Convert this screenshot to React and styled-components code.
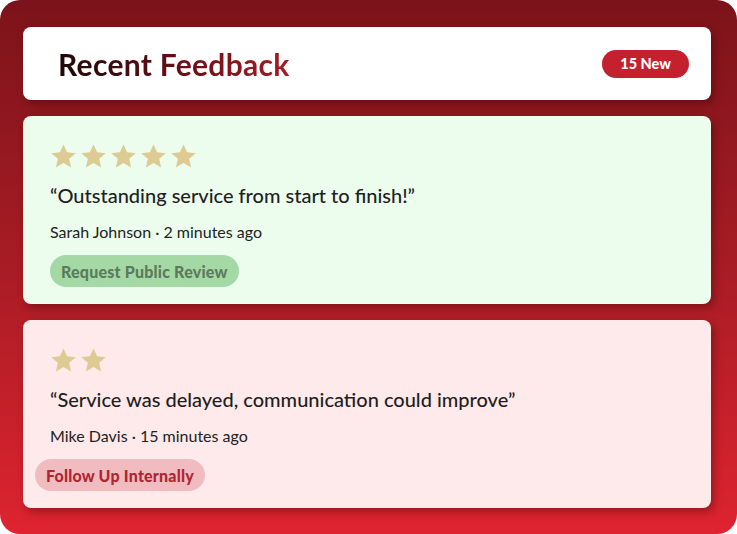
import React from "react";
import styled, { createGlobalStyle } from "styled-components";

const Global = createGlobalStyle`
  html, body { margin: 0; padding: 0; background: #ffffff; }
  * { box-sizing: border-box; }
`;

const Frame = styled.div`
  width: 737px;
  height: 534px;
  border-radius: 20px;
  background: linear-gradient(180deg, #7c131a 0%, #a81c24 50%, #de2430 100%);
  padding: 27px 26px 26px 23px;
  display: flex;
  flex-direction: column;
  gap: 16px;
  font-family: "Lato", "Liberation Sans", sans-serif;
`;

const Header = styled.div`
  height: 73px;
  flex-shrink: 0;
  background: #ffffff;
  border-radius: 8px;
  box-shadow: 3px 4px 8px rgba(40, 0, 0, 0.35);
  display: flex;
  align-items: center;
  justify-content: space-between;
  padding: 0 22px 0 35px;
`;

const Title = styled.h1`
  margin: 0;
  font-size: 30px;
  font-weight: 700;
  letter-spacing: 0.3px;
  background: linear-gradient(90deg, #1e0708 0%, #6a1016 55%, #a51d26 100%);
  -webkit-background-clip: text;
  background-clip: text;
  color: transparent;
`;

const Badge = styled.span`
  height: 28px;
  padding: 0 18px;
  border-radius: 14px;
  background: #c4202e;
  color: #ffffff;
  font-size: 14.5px;
  font-weight: 900;
  display: flex;
  align-items: center;
`;

const Card = styled.div`
  height: 188px;
  flex-shrink: 0;
  background: ${(p) => (p.$tone === "good" ? "#ecfdee" : "#feeaea")};
  border-radius: 8px;
  box-shadow: 3px 4px 8px rgba(40, 0, 0, 0.35);
  padding: 26px 27px 17px 27px;
  display: flex;
  flex-direction: column;
  align-items: flex-start;
`;

const Stars = styled.div`
  display: flex;
  gap: 3px;
  height: 28px;
  align-items: center;
`;

const Star = styled.svg`
  width: 27px;
  height: 27px;
  display: block;
`;

const Quote = styled.p`
  margin: 12px 0 0;
  font-size: 20px;
  font-weight: 500;
  color: #1f1f1f;
  line-height: 26px;
`;

const Meta = styled.p`
  margin: 14px 0 0;
  font-size: 16px;
  color: #222222;
  line-height: 20px;
`;

const Action = styled.button`
  margin-top: 13px;
  margin-left: ${(p) => (p.$shift ? "-15px" : "0")};
  height: 32px;
  padding: 0 11px;
  border: none;
  border-radius: 16px;
  background: ${(p) => (p.$tone === "good" ? "#a4d9a5" : "#f1bcc0")};
  color: ${(p) => (p.$tone === "good" ? "#5b7b5c" : "#ae2632")};
  font-family: "Lato", "Liberation Sans", sans-serif;
  font-size: 16px;
  font-weight: 900;
  letter-spacing: 0.2px;
  cursor: pointer;
`;

const StarIcon = () => (
  <Star viewBox="0 0 24 24">
    <path
      d="M12 1.3l3.2 7 7.7.7-5.9 5.1 1.8 7.6L12 17.8l-6.8 3.9 1.8-7.6-5.9-5.1 7.7-.7z"
      fill="#ddcb93"
    />
  </Star>
);

const reviews = [
  {
    stars: 5,
    quote: "“Outstanding service from start to finish!”",
    meta: "Sarah Johnson · 2 minutes ago",
    action: "Request Public Review",
    tone: "good",
  },
  {
    stars: 2,
    quote: "“Service was delayed, communication could improve”",
    meta: "Mike Davis · 15 minutes ago",
    action: "Follow Up Internally",
    tone: "bad",
    shift: true,
  },
];

export default function App() {
  return (
    <>
      <Global />
      <Frame>
        <Header>
          <Title>Recent Feedback</Title>
          <Badge>15 New</Badge>
        </Header>
        {reviews.map((r) => (
          <Card key={r.meta} $tone={r.tone}>
            <Stars>
              {Array.from({ length: r.stars }).map((_, i) => (
                <StarIcon key={i} />
              ))}
            </Stars>
            <Quote>{r.quote}</Quote>
            <Meta>{r.meta}</Meta>
            <Action $tone={r.tone} $shift={r.shift}>
              {r.action}
            </Action>
          </Card>
        ))}
      </Frame>
    </>
  );
}
